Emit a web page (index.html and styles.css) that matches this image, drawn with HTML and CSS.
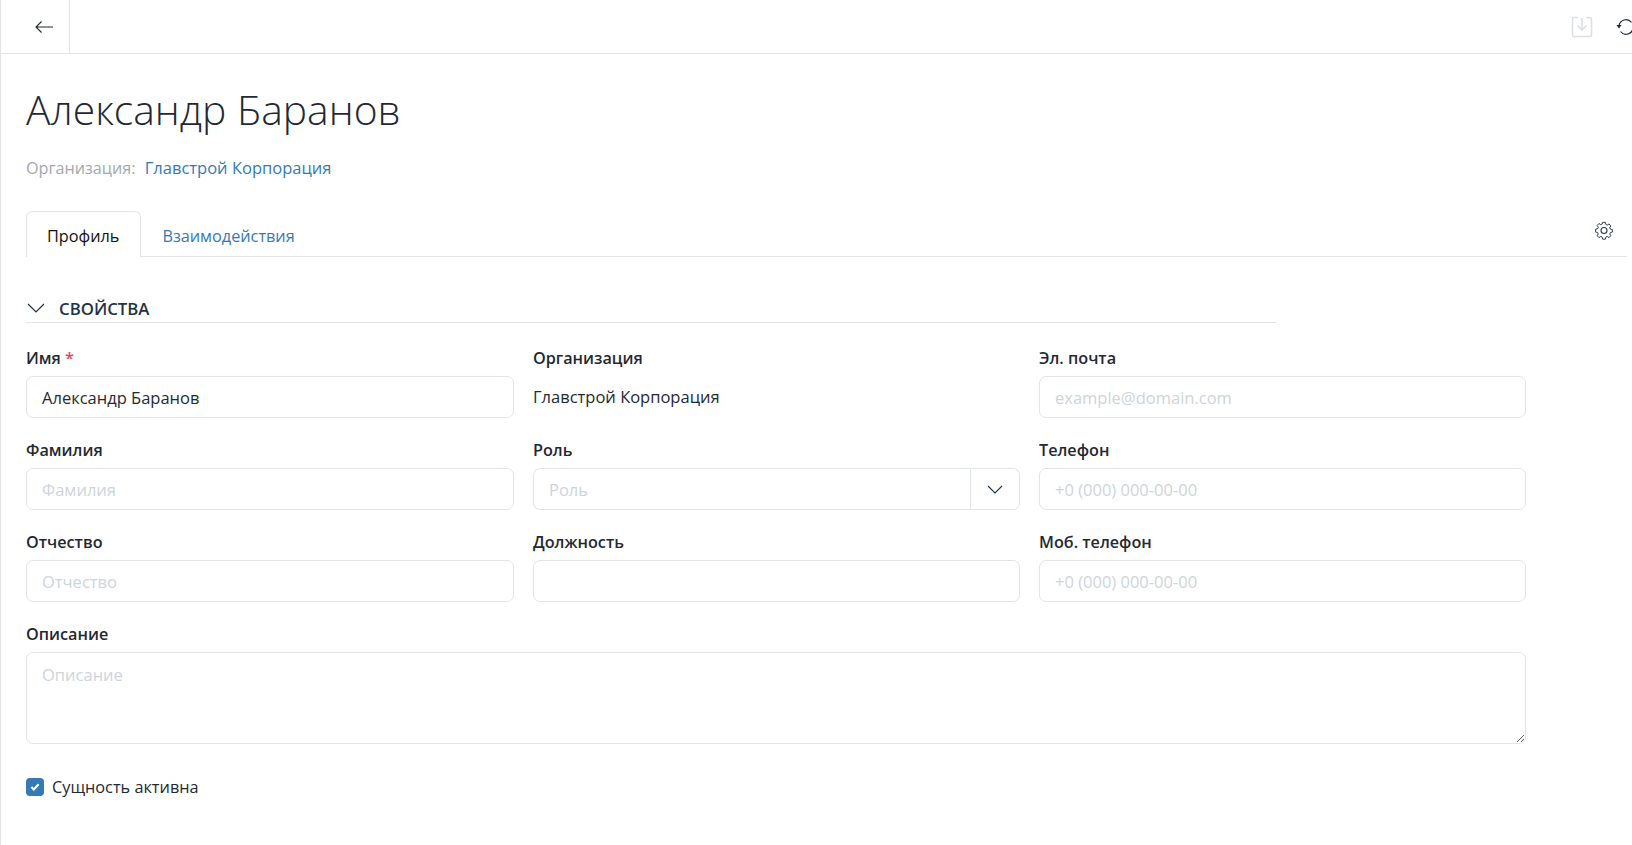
FILE: index.html
```html
<!DOCTYPE html>
<html lang="ru">

<head>
    <meta charset="UTF-8">
    <title>Александр Баранов</title>
    <link rel="stylesheet" href="styles.css">
</head>

<body>
    <!-- Top toolbar -->
    <div class="toolbar">
        <div class="back-btn">
            <svg width="20" height="14" viewBox="0 0 20 14" fill="none" stroke="#1f2933" stroke-width="1.1">
                <path d="M19 7H2M7.500 1.500 2 7l5.500 5.500" />
            </svg>
        </div>
        <div class="toolbar-actions">
            <svg class="save-icon" width="22" height="22" viewBox="0 0 22 22" fill="none" stroke="#dcdfe4" stroke-width="1.600">
                <path d="M7 1.500H3A1.500 1.500 0 0 0 1.500 3v16A1.500 1.500 0 0 0 3 20.500h16a1.500 1.500 0 0 0 1.500-1.500V3A1.500 1.500 0 0 0 19 1.500h-4" />
                <path d="M11 2v12M6.500 9.500 11 14l4.500-4.500" />
            </svg>
            <svg class="refresh-icon" width="20" height="20" viewBox="0 0 20 20" fill="none" stroke="#1f2933" stroke-width="1.200">
                <path d="M3 9A7 7 0 0 1 15.500 5.500M17 11A7 7 0 0 1 4.500 14.500" />
                <path d="M3 11.500 .5 8h5z" fill="#1f2933" stroke="none" />
            </svg>
        </div>
    </div>

    <div class="page">
        <h1>Александр Баранов</h1>
        <p class="org-line"><span class="org-caption">Организация:</span> <a href="#" class="link">Главстрой Корпорация</a></p>

        <!-- Tabs -->
        <div class="tabs">
            <div class="tab active">Профиль</div>
            <div class="tab">Взаимодействия</div>
            <svg class="gear-icon" width="20" height="20" viewBox="0 0 20 20" fill="none" stroke="#2b3a4a" stroke-width="1.100">
                <path d="M8.500 1.500h3l.5 2.300 1.600.7 2-1.200 2 2.200-1.200 2 .6 1.500 2.300.5v2.800l-2.300.6-.6 1.500 1.200 2-2 2-2-1.200-1.600.7-.5 2.300h-3l-.5-2.300-1.600-.7-2 1.200-2-2 1.200-2-.6-1.500-2.300-.6V9l2.300-.5.600-1.500-1.200-2 2-2.200 2 1.200 1.600-.7z" transform="translate(1 1) scale(.9)" />
                <circle cx="10" cy="10.500" r="3" />
            </svg>
        </div>

        <!-- Properties section -->
        <div class="section-head">
            <svg width="18" height="10" viewBox="0 0 18 10" fill="none" stroke="#1f3347" stroke-width="1.200">
                <path d="M1 1l8 8 8-8" />
            </svg>
            <span>СВОЙСТВА</span>
        </div>

        <div class="form-grid">
            <div class="field">
                <label>Имя <span class="required">*</span></label>
                <input type="text" value="Александр Баранов">
            </div>
            <div class="field">
                <label>Организация</label>
                <div class="static-value">Главстрой Корпорация</div>
            </div>
            <div class="field">
                <label>Эл. почта</label>
                <input type="text" placeholder="example@domain.com">
            </div>

            <div class="field">
                <label>Фамилия</label>
                <input type="text" placeholder="Фамилия">
            </div>
            <div class="field">
                <label>Роль</label>
                <div class="select-box">
                    <input type="text" placeholder="Роль">
                    <div class="select-btn">
                        <svg width="16" height="9" viewBox="0 0 16 9" fill="none" stroke="#1f3347" stroke-width="1.100">
                            <path d="M1 1l7 7 7-7" />
                        </svg>
                    </div>
                </div>
            </div>
            <div class="field">
                <label>Телефон</label>
                <input type="text" placeholder="+0 (000) 000-00-00">
            </div>

            <div class="field">
                <label>Отчество</label>
                <input type="text" placeholder="Отчество">
            </div>
            <div class="field">
                <label>Должность</label>
                <input type="text">
            </div>
            <div class="field">
                <label>Моб. телефон</label>
                <input type="text" placeholder="+0 (000) 000-00-00">
            </div>

            <div class="field wide">
                <label>Описание</label>
                <textarea placeholder="Описание"></textarea>
            </div>
        </div>

        <div class="active-row">
            <span class="checkbox">
                <svg width="10" height="8" viewBox="0 0 12 10" fill="none" stroke="#fff" stroke-width="2.600">
                    <path d="M1.500 5 4.500 8l6-6.500" />
                </svg>
            </span>
            <span>Сущность активна</span>
        </div>
    </div>
</body>

</html>
```

FILE: styles.css
```css
html {
    overflow: hidden;
}

body {
    margin: 0;
    height: 845px;
    font-family: "Open Sans", "Noto Sans", sans-serif;
    font-size: 16.5px;
    color: #1f2933;
    background-color: #fff;
    border-left: 1px solid #e1e4ea;
    overflow: hidden;
}

.toolbar {
    display: flex;
    justify-content: space-between;
    height: 53px;
    border-bottom: 1px solid #e1e4ea;
}

.back-btn {
    display: flex;
    align-items: center;
    justify-content: center;
    width: 51px;
    padding-left: 17px;
    border-right: 1px solid #e1e4ea;
}

.toolbar-actions {
    display: flex;
    align-items: center;
    gap: 23px;
    width: 61px;
    flex-shrink: 0;
    overflow: hidden;
}

.save-icon,
.refresh-icon {
    flex-shrink: 0;
}

.page {
    padding: 27px 5px 0 25px;
}

h1 {
    margin: 0;
    font-size: 40.8px;
    font-weight: 300;
    line-height: 56px;
    color: #1f2933;
}

.org-line {
    margin: 19px 0 0;
    line-height: 24px;
}

.org-caption {
    font-size: 16.2px;
    color: #a3a8ae;
    margin-right: 5px;
}

.link {
    color: #337ab7;
    text-decoration: none;
}

.tabs {
    display: flex;
    align-items: flex-end;
    position: relative;
    height: 44px;
    margin-top: 32px;
    border-bottom: 1px solid #e1e4ea;
}

.tab {
    height: 44px;
    line-height: 49px;
    padding: 0 21px;
    font-size: 16.25px;
    color: #337ab7;
}

.tab.active {
    height: 45px;
    margin-bottom: -1px;
    padding: 0 21px 0 20px;
    color: #111;
    background-color: #fff;
    border: 1px solid #e1e4ea;
    border-bottom: none;
    border-radius: 6px 6px 0 0;
}

.gear-icon {
    position: absolute;
    right: 13px;
    top: 8px;
}

.section-head {
    display: flex;
    align-items: center;
    gap: 14px;
    width: 1250px;
    height: 29px;
    margin-top: 37px;
    padding-left: 1px;
    box-sizing: border-box;
    border-bottom: 1px solid #e1e4ea;
    font-weight: 600;
    font-size: 16.8px;
    color: #1f3347;
}

.form-grid {
    display: grid;
    grid-template-columns: 488px 487px 487px;
    column-gap: 19px;
    row-gap: 19px;
    margin-top: 22px;
}

.field {
    display: flex;
    flex-direction: column;
}

.field.wide {
    grid-column: 1 / 4;
}

label {
    font-size: 16.2px;
    font-weight: 600;
    line-height: 26px;
    height: 31px;
    color: #1f2933;
}

.required {
    color: #e0475b;
}

input,
textarea {
    width: 100%;
    box-sizing: border-box;
    font-family: inherit;
    font-size: inherit;
    color: #1f2933;
    background-color: #fff;
    border: 1px solid #e1e4ea;
    border-radius: 7px;
    padding: 0 15px;
    outline: none;
}

input {
    height: 42px;
}

textarea {
    height: 92px;
    padding-top: 10px;
    display: block;
}

input::placeholder,
textarea::placeholder {
    color: #ced4da;
    opacity: 1;
}

.static-value {
    height: 42px;
    line-height: 42px;
}

.select-box {
    display: flex;
    height: 42px;
}

.select-box input {
    flex: 1;
    border-right: none;
    border-radius: 7px 0 0 7px;
}

.select-btn {
    display: flex;
    align-items: center;
    justify-content: center;
    width: 48px;
    border: 1px solid #e1e4ea;
    border-radius: 0 7px 7px 0;
}

.active-row {
    display: flex;
    align-items: center;
    gap: 8px;
    margin-top: 33px;
    height: 20px;
    font-size: 16.3px;
}

.checkbox {
    display: flex;
    align-items: center;
    justify-content: center;
    width: 18px;
    height: 18px;
    border-radius: 4px;
    background-color: #337ab7;
}
```
